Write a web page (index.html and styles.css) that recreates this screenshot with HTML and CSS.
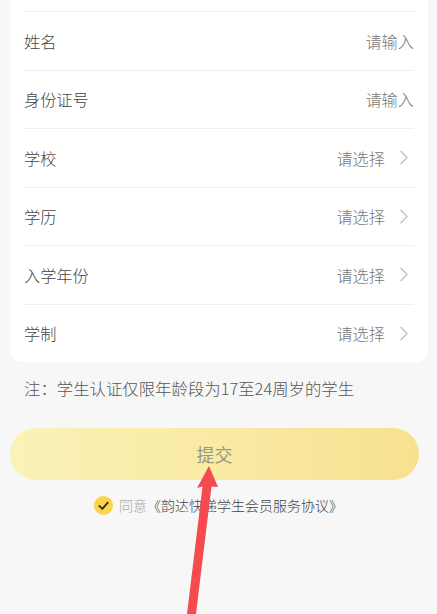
FILE: index.html
```html
<!DOCTYPE html>
<html lang="zh-CN">
<head>
<meta charset="utf-8">
<title>学生认证</title>
<link rel="stylesheet" href="styles.css">
</head>
<body>
<div class="page">
  <div class="card">
    <div class="row"><span class="label">姓名</span><span class="value">请输入</span></div>
    <div class="row"><span class="label">身份证号</span><span class="value">请输入</span></div>
    <div class="row"><span class="label">学校</span><span class="value">请选择<svg class="chev" viewBox="0 0 9 16"><polyline points="1,1 8,8 1,15"/></svg></span></div>
    <div class="row"><span class="label">学历</span><span class="value">请选择<svg class="chev" viewBox="0 0 9 16"><polyline points="1,1 8,8 1,15"/></svg></span></div>
    <div class="row"><span class="label">入学年份</span><span class="value">请选择<svg class="chev" viewBox="0 0 9 16"><polyline points="1,1 8,8 1,15"/></svg></span></div>
    <div class="row"><span class="label">学制</span><span class="value">请选择<svg class="chev" viewBox="0 0 9 16"><polyline points="1,1 8,8 1,15"/></svg></span></div>
  </div>
  <p class="note">注：学生认证仅限年龄段为17至24周岁的学生</p>
  <button class="submit">提交</button>
  <div class="agree">
    <span class="check"><svg viewBox="0 0 20 20"><polyline points="5.5,10.5 8.8,13.6 14.5,7"/></svg></span>
    <span class="agree-text"><span class="muted">同意</span>《韵达快递学生会员服务协议》</span>
  </div>
</div>
<svg class="arrow" viewBox="0 0 437 614" aria-hidden="true">
  <polygon points="209,466 218,487 211.5,486.5 196,614 187,614 202.5,486.5 197,488"/>
</svg>
</body>
</html>
```
FILE: styles.css
```css
html, body {
  margin: 0;
  padding: 0;
}
body {
  background: #f7f7f7;
  font-family: "Noto Sans CJK SC", "Noto Sans", sans-serif;
  font-weight: 300;
  width: 437px;
  height: 614px;
  overflow: hidden;
  position: relative;
}
.page {
  display: flex;
  flex-direction: column;
}
.card {
  background: #fff;
  margin: 0 9px 0 10px;
  padding: 11px 14px 0;
  border-radius: 0 0 12px 12px;
}
.row {
  box-sizing: border-box;
  height: 58.5px;
  border-top: 1px solid #efefef;
  display: flex;
  align-items: center;
  justify-content: space-between;
  font-size: 16.2px;
}
.label {
  color: #444;
}
.value {
  color: #777;
  display: flex;
  align-items: center;
}
.chev {
  width: 8px;
  height: 15px;
  margin-left: 15px;
  margin-right: 6px;
  fill: none;
  stroke: #bdbdbd;
  stroke-width: 1.4;
  stroke-linecap: round;
  stroke-linejoin: round;
}
.note {
  margin: 14px 0 0 24px;
  font-size: 16.4px;
  line-height: 24px;
  color: #555;
}
.submit {
  margin: 28px 0 0 10px;
  width: 409px;
  height: 52px;
  border: none;
  border-radius: 26px;
  background: linear-gradient(90deg, #fbf2b8 0%, #f9eaa4 50%, #f7e190 100%);
  color: #9a9686;
  font-family: "Noto Sans CJK SC", sans-serif;
  font-weight: 400;
  font-size: 18px;
  padding: 0;
}
.agree {
  margin-top: 15px;
  display: flex;
  align-items: center;
  justify-content: center;
  height: 20px;
}
.check {
  width: 19px;
  height: 19px;
  border-radius: 50%;
  background: #fcd44c;
  display: flex;
  margin-right: 6px;
}
.check svg {
  width: 19px;
  height: 19px;
  fill: none;
  stroke: #2b2b2b;
  stroke-width: 1.8;
  stroke-linecap: round;
  stroke-linejoin: round;
}
.agree-text {
  font-size: 14px;
  color: #444;
}
.muted {
  color: #a8a8a8;
}
.arrow {
  position: absolute;
  left: 0;
  top: 0;
  width: 437px;
  height: 614px;
  fill: #f54a50;
  pointer-events: none;
}
```
